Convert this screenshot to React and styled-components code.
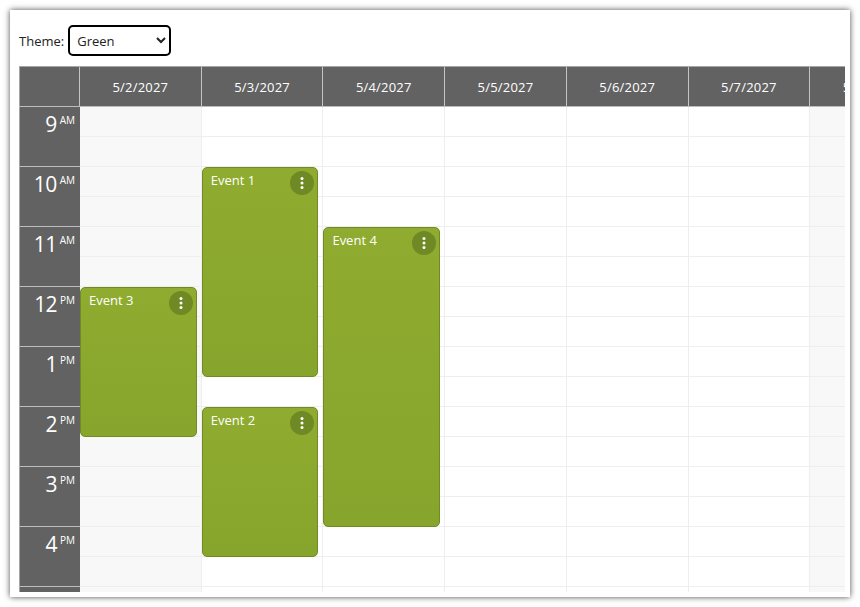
import React from "react";
import styled, { createGlobalStyle } from "styled-components";

const Global = createGlobalStyle`
  html, body { margin: 0; padding: 0; background: #fff; overflow: hidden; }
  body { font-family: "Open Sans", "Liberation Sans", sans-serif; font-size: 13px; color: #222; }
`;

const Frame = styled.div`
  box-sizing: border-box;
  width: 840px;
  height: 587px;
  margin: 10px;
  padding: 15px 5px 5px 9px;
  background: #fff;
  box-shadow: 0 0 6px rgba(0, 0, 0, 0.7);
  overflow: hidden;
`;

const Toolbar = styled.div`
  display: flex;
  align-items: center;
  gap: 4px;
  height: 31px;
  margin-bottom: 10px;
`;

const Label = styled.label`
  font-size: 13px;
`;

const ThemeSelect = styled.select`
  box-sizing: border-box;
  width: 103px;
  height: 31px;
  padding: 0 3px;
  background: #fff;
  border: 2px solid #000;
  border-radius: 5px;
  font-family: inherit;
  font-size: 13px;
  color: #222;
`;

const Scheduler = styled.div`
  height: 526px;
  overflow: hidden;
`;

const HeaderRow = styled.div`
  display: flex;
  width: max-content;
  height: 41px;
  background: #626262;
  border-top: 1px solid #a6a6a6;
  box-sizing: border-box;
  border-bottom: 1px solid #bdbdbd;
`;

const Corner = styled.div`
  box-sizing: border-box;
  width: 61px;
  border-left: 1px solid #a6a6a6;
  border-right: 1px solid #c4c4c4;
`;

const DayHead = styled.div`
  box-sizing: border-box;
  width: 121.71px;
  display: flex;
  align-items: center;
  justify-content: center;
  color: #fff;
  font-size: 13px;
  letter-spacing: 0.2px;
  border-right: 1px solid #c4c4c4;
`;

const Body = styled.div`
  display: flex;
  width: max-content;
`;

const TimeColumn = styled.div`
  width: 61px;
  flex: none;
`;

const TimeCell = styled.div`
  box-sizing: border-box;
  height: 60px;
  display: flex;
  justify-content: flex-end;
  align-items: flex-start;
  gap: 3px;
  padding: 4px 5px 0 0;
  background: #626262;
  color: #fff;
  border-left: 1px solid #a6a6a6;
  border-bottom: 1px solid #bdbdbd;
`;

const Hour = styled.span`
  font-size: 21px;
  line-height: 26px;
  letter-spacing: -0.6px;
`;

const Meridiem = styled.span`
  font-size: 10px;
  line-height: 13px;
  margin-top: 3px;
`;

const DayColumn = styled.div`
  position: relative;
  box-sizing: border-box;
  width: 121.71px;
  flex: none;
  background: ${(p) => (p.$weekend ? "#f8f8f8" : "#fff")};
  border-right: 1px solid #eee;
`;

const Slot = styled.div`
  box-sizing: border-box;
  height: 30px;
  border-bottom: 1px solid #eee;
`;

const Event = styled.div`
  position: absolute;
  left: 0;
  top: ${(p) => p.$top}px;
  box-sizing: border-box;
  width: 116.7px;
  height: ${(p) => p.$height}px;
  padding: 3px 8px;
  color: #fff;
  font-size: 13px;
  line-height: 18px;
  background: linear-gradient(#8fac30, #87a52c);
  border: 1px solid #6f8b22;
  border-radius: 5px;
`;

const EventMenu = styled.div`
  position: absolute;
  top: 3px;
  right: 3px;
  width: 24px;
  height: 24px;
  display: flex;
  align-items: center;
  justify-content: center;
  border-radius: 50%;
  background: #6f8a24;
`;

const Kebab = () => (
  <svg width="4" height="14" viewBox="0 0 4 14" fill="#fff">
    <circle cx="2" cy="2.5" r="1.5" />
    <circle cx="2" cy="7" r="1.5" />
    <circle cx="2" cy="11.5" r="1.5" />
  </svg>
);

const days = ["5/2/2027", "5/3/2027", "5/4/2027", "5/5/2027", "5/6/2027", "5/7/2027", "5/8/2027"];
const hours = [["9", "AM"], ["10", "AM"], ["11", "AM"], ["12", "PM"], ["1", "PM"], ["2", "PM"], ["3", "PM"], ["4", "PM"], ["5", "PM"]];
const events = {
  0: [{ name: "Event 3", top: 180, height: 150 }],
  1: [{ name: "Event 1", top: 60, height: 210 }, { name: "Event 2", top: 300, height: 150 }],
  2: [{ name: "Event 4", top: 120, height: 300 }],
};

export default function App() {
  return (
    <>
      <Global />
      <Frame>
        <Toolbar>
          <Label htmlFor="theme">Theme:</Label>
          <ThemeSelect id="theme" defaultValue="Green">
            <option>Green</option>
            <option>Blue</option>
            <option>Orange</option>
          </ThemeSelect>
        </Toolbar>
        <Scheduler>
          <HeaderRow>
            <Corner />
            {days.map((d) => (
              <DayHead key={d}>{d}</DayHead>
            ))}
          </HeaderRow>
          <Body>
            <TimeColumn>
              {hours.map(([h, m]) => (
                <TimeCell key={h}>
                  <Hour>{h}</Hour>
                  <Meridiem>{m}</Meridiem>
                </TimeCell>
              ))}
            </TimeColumn>
            {days.map((d, i) => (
              <DayColumn key={d} $weekend={i === 0 || i === 6}>
                {hours.flatMap(([h]) => [<Slot key={h + "a"} />, <Slot key={h + "b"} />])}
                {(events[i] || []).map((e) => (
                  <Event key={e.name} $top={e.top} $height={e.height}>
                    {e.name}
                    <EventMenu>
                      <Kebab />
                    </EventMenu>
                  </Event>
                ))}
              </DayColumn>
            ))}
          </Body>
        </Scheduler>
      </Frame>
    </>
  );
}
